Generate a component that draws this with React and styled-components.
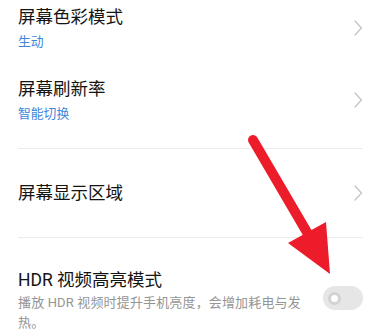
import React from 'react'
import styled, { createGlobalStyle } from 'styled-components'

const GlobalStyle = createGlobalStyle`
  html, body {
    margin: 0;
    padding: 0;
    background: #ffffff;
  }
  body {
    font-family: Roboto, "Noto Sans CJK SC", sans-serif;
    width: 390px;
    height: 330px;
    overflow: hidden;
  }
`

const Page = styled.div`
  position: relative;
  width: 390px;
  height: 330px;
  overflow: hidden;
  background: #fff;
`
const List = styled.div`
  display: flex;
  flex-direction: column;
  padding: 0 27px 0 18px;
  margin-top: -8px;
`
const Row = styled.div`
  display: flex;
  justify-content: space-between;
  height: ${props => props.height}px;
  padding-top: ${props => props.padTop || 0}px;
  box-sizing: border-box;
  align-items: ${props => props.align || 'center'};
`
const Text = styled.div`
  display: flex;
  flex-direction: column;
  min-width: 0;
  flex: ${props => props.wide ? '0 0 292px' : '1'};
`
const Title = styled.div`
  font-size: 17.5px;
  line-height: 24px;
  color: #141414;
`
const Value = styled.div`
  margin-top: 4px;
  font-size: 12.8px;
  line-height: 18px;
  color: #3e86dc;
`
const Desc = styled.div`
  margin-top: 1px;
  font-size: 13px;
  letter-spacing: 0.15px;
  line-height: 20px;
  color: #959595;
`
const Divider = styled.div`
  height: 1px;
  background: #ececec;
  margin-top: ${props => props.gap || 0}px;
`
const Toggle = styled.div`
  width: 40px;
  height: 24px;
  border-radius: 12px;
  background: #e6e6e6;
  display: flex;
  align-items: center;
  padding-left: 5px;
  box-sizing: border-box;
  margin-top: ${props => props.offset || 0}px;
`
const Knob = styled.div`
  width: 7px;
  height: 7px;
  border-radius: 50%;
  background: #fff;
  border: 3px solid #d2d2d2;
`
const Overlay = styled.svg`
  position: absolute;
  left: 0;
  top: 0;
  pointer-events: none;
`

const Chevron = () => (
  <svg width="9" height="16" viewBox="0 0 9 16">
    <path d="M1 1 L7.5 8 L1 15" fill="none" stroke="#c6c6c6" strokeWidth="1.4" strokeLinecap="round" strokeLinejoin="round" />
  </svg>
)

export default function App() {
  return (
    <Page>
      <GlobalStyle />
      <List>
        <Row height={72}>
          <Text>
            <Title>屏幕色彩模式</Title>
            <Value>生动</Value>
          </Text>
          <Chevron />
        </Row>
        <Row height={72}>
          <Text>
            <Title>屏幕刷新率</Title>
            <Value>智能切换</Value>
          </Text>
          <Chevron />
        </Row>
        <Divider gap={12} />
        <Row height={88}>
          <Text>
            <Title>屏幕显示区域</Title>
          </Text>
          <Chevron />
        </Row>
        <Divider />
        <Row height={100} padTop={30} align="flex-start">
          <Text wide>
            <Title>HDR 视频高亮模式</Title>
            <Desc>播放 HDR 视频时提升手机亮度，会增加耗电与发热。</Desc>
          </Text>
          <Toggle offset={18}>
            <Knob />
          </Toggle>
        </Row>
      </List>
      <Overlay width="390" height="330" viewBox="0 0 390 330">
        <line x1="253" y1="140" x2="308" y2="234" stroke="#ec1c2a" strokeWidth="10" strokeLinecap="round" />
        <polygon points="288,243 326,222 330,274" fill="#ec1c2a" />
      </Overlay>
    </Page>
  )
}
